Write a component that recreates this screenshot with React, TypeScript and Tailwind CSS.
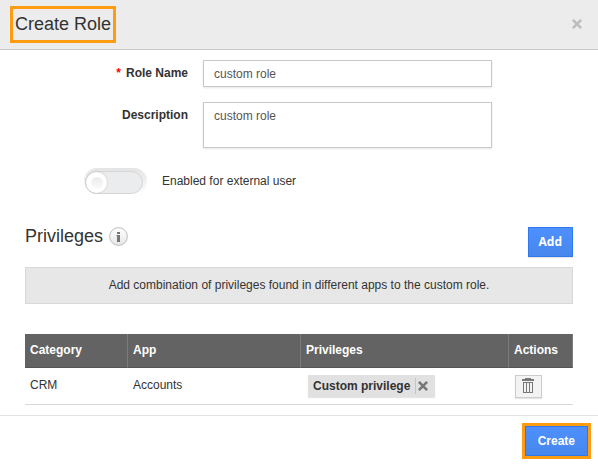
import { useState } from "react";

interface Privilege {
  id: string;
  category: string;
  app: string;
  label: string;
}

const INITIAL_PRIVILEGES: Privilege[] = [
  { id: "crm-accounts", category: "CRM", app: "Accounts", label: "Custom privilege" },
];

function CrossIcon({ className }: { className: string }) {
  return (
    <svg viewBox="0 0 10 10" className={className} fill="none" stroke="currentColor" strokeWidth="2.6" aria-hidden="true">
      <path d="M.9.9L9.1 9.1M9.1.9L.9 9.1" />
    </svg>
  );
}

function TrashIcon() {
  return (
    <svg viewBox="0 0 12 15" className="h-[15px] w-3" fill="#777" shapeRendering="crispEdges" aria-hidden="true">
      <path d="M3 0h6v1h3v2H0V1h3z" />
      <path d="M1 4h10v11H1zM2 5v9h2V5zM5 5v9h2V5zM8 5v9h2V5z" fillRule="evenodd" />
    </svg>
  );
}

function InfoIcon() {
  return (
    <svg viewBox="0 0 19 19" className="size-[19px]" aria-hidden="true">
      <defs>
        <linearGradient id="info-fill" x1="0" y1="0" x2="0" y2="1">
          <stop offset="0" stopColor="#fff" />
          <stop offset="1" stopColor="#e6e6e6" />
        </linearGradient>
      </defs>
      <circle cx="9.5" cy="9.5" r="8.9" fill="url(#info-fill)" stroke="#bdbdbd" />
      <path d="M8 5h3v2H8zM7.5 8H11v7H8V9h-.5z" fill="#777" />
    </svg>
  );
}

export default function App() {
  const [name, setName]               = useState("custom role");
  const [description, setDescription] = useState("custom role");
  const [external, setExternal]       = useState(false);
  const [privileges, setPrivileges]   = useState(INITIAL_PRIVILEGES);

  const remove = (id: string) =>
    setPrivileges((prev) => prev.filter((p) => p.id !== id));

  return (
    <div className="bg-white font-['Liberation_Sans',Arial,sans-serif] text-xs text-[#333]">
      {/* Header */}
      <header className="flex items-center justify-between border-b border-[#c8c8c8] bg-[#ececec] pt-1.5 pr-[14px] pb-1.5 pl-2.5">
        <h1 className="border-3 border-[#ff9c12] px-0.5 pt-[3px] pb-1 text-lg leading-6">Create Role</h1>
        <button type="button" aria-label="Close" className="px-0.5 pb-0.5 text-[#bdbdbd]">
          <CrossIcon className="size-2.5" />
        </button>
      </header>

      {/* Role details */}
      <div className="grid grid-cols-[188px_1fr] gap-x-[15px] gap-y-[15px] pt-2.5 pr-[106px]">
        <label htmlFor="role-name" className="pt-[5px] text-right font-bold leading-4">
          <span className="mr-[5px] text-[#f00]">*</span>Role Name
        </label>
        <input
          id="role-name"
          value={name}
          onChange={(e) => setName(e.target.value)}
          className="h-[27px] w-full border border-[#c8c8c8] px-2.5 text-[#555] shadow-[0_1px_2px_#0000001a] outline-none"
        />
        <label htmlFor="role-description" className="pt-[5px] text-right font-bold leading-4">
          Description
        </label>
        <textarea
          id="role-description"
          value={description}
          onChange={(e) => setDescription(e.target.value)}
          className="block h-[46px] w-full resize-none border border-[#c8c8c8] px-2.5 py-1 leading-[18px] text-[#555] shadow-[0_1px_2px_#0000001a] outline-none"
        />
      </div>

      {/* External user switch */}
      <label className="mt-5 ml-[84px] flex w-fit items-center gap-[15px]">
        <input
          type="checkbox"
          role="switch"
          checked={external}
          onChange={(e) => setExternal(e.target.checked)}
          className="peer sr-only"
        />
        <span className="flex h-[26px] w-[63px] rounded-full bg-linear-to-b from-[#e4e4e4] to-[#fdfdfd] pt-[3px] pr-1 pl-px peer-checked:[&>span]:justify-end">
          <span className="flex flex-1 items-center rounded-full border border-[#d4d5d6] bg-[#ebecee]">
            <span className="flex size-[21px] items-center justify-center rounded-full bg-white shadow-[0_0_2px_#00000033]">
              <span className="size-3 rounded-full bg-linear-to-b from-[#ebebeb] to-[#fbfbfb]" />
            </span>
          </span>
        </span>
        <span>Enabled for external user</span>
      </label>

      {/* Privileges */}
      <section className="px-[25px] pt-[33px] pb-2.5">
        <div className="flex items-start justify-between">
          <div className="flex items-center gap-1.5">
            <h2 className="text-lg leading-[19px]">Privileges</h2>
            <button type="button" aria-label="About privileges">
              <InfoIcon />
            </button>
          </div>
          <button
            type="button"
            className="h-[30px] border border-[#3079ed] bg-linear-to-b from-[#4d90fe] to-[#4787ed] px-2.5 font-['Open_Sans','Noto_Sans',sans-serif] font-bold text-white shadow-[0_1px_1px_#0000001a]"
          >
            Add
          </button>
        </div>

        <p className="mt-2.5 border border-[#d8d8d8] bg-[#e7e7e7] px-4 pt-[9px] pb-2.5 text-center leading-4">
          Add combination of privileges found in different apps to the custom role.
        </p>

        <table className="mt-[30px] w-full table-fixed border-separate border-spacing-0 text-left">
          <thead>
            <tr className="h-[34px] bg-[#636363] text-white [&>th]:border-r [&>th]:border-b [&>th]:border-r-[#7b7b7b] [&>th]:border-b-[#555] [&>th]:px-[5px] [&>th]:pb-px">
              <th className="w-[103px]">Category</th>
              <th className="w-[173px]">App</th>
              <th>Privileges</th>
              <th className="w-16">Actions</th>
            </tr>
          </thead>
          <tbody>
            {privileges.map((p) => (
              <tr key={p.id} className="h-[37px] [&>td]:border-b [&>td]:border-[#d8d8d8] [&>td]:px-[5px]">
                <td className="pb-[3px]">{p.category}</td>
                <td className="pb-[3px]">{p.app}</td>
                <td>
                  <span className="ml-0.5 flex h-[22px] w-fit items-center bg-[#e1e1e1] pr-[7px] pl-[5px] font-bold shadow-[0_1px_1px_#0000001a]">
                    {p.label}
                    <button
                      type="button"
                      aria-label={`Remove ${p.label}`}
                      className="ml-[5px] flex h-4 items-center border-l border-[#c4c4c4] pl-0.5 text-[#777]"
                    >
                      <CrossIcon className="size-2.5" />
                    </button>
                  </span>
                </td>
                <td>
                  <button
                    type="button"
                    aria-label={`Delete ${p.app}`}
                    onClick={() => remove(p.id)}
                    className="ml-px flex h-[23px] w-[27px] items-center justify-center border border-[#ccc] bg-[#f3f3f3] pr-px pb-0.5 shadow-[0_1px_1px_#0000001a]"
                  >
                    <TrashIcon />
                  </button>
                </td>
              </tr>
            ))}
          </tbody>
        </table>
      </section>

      {/* Footer */}
      <footer className="flex justify-end border-t border-[#e2e2e2] px-[7px] py-[7px]">
        <div className="border-3 border-[#ff9c12]">
          <button
            type="button"
            className="block h-[30px] border border-[#3079ed] bg-linear-to-b from-[#4d90fe] to-[#4787ed] px-3 font-bold text-white"
          >
            Create
          </button>
        </div>
      </footer>
    </div>
  );
}
